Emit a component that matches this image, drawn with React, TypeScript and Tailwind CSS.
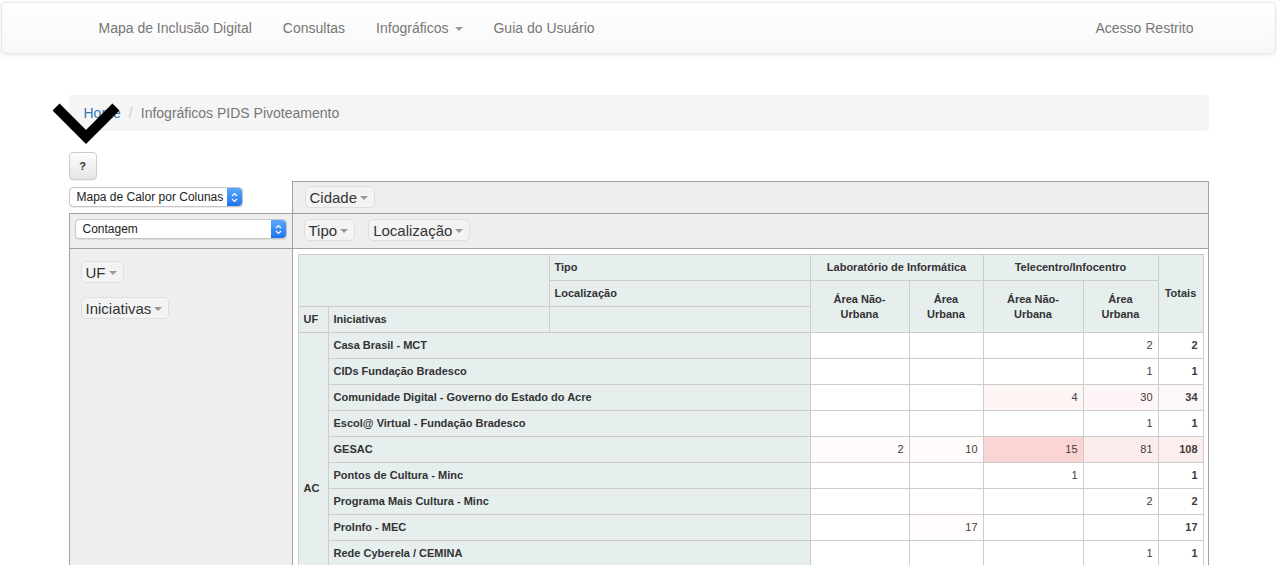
import React from "react";

type Row = {
  name: string;
  cells: (number | null)[];
  bgs: string[];
  total: number;
  totalBg: string;
};

const W = "#ffffff";

const rows: Row[] = [
  { name: "Casa Brasil - MCT", cells: [null, null, null, 2], bgs: [W, W, W, W], total: 2, totalBg: W },
  { name: "CIDs Fundação Bradesco", cells: [null, null, null, 1], bgs: [W, W, W, W], total: 1, totalBg: W },
  {
    name: "Comunidade Digital - Governo do Estado do Acre",
    cells: [null, null, 4, 30],
    bgs: [W, W, "#fef5f5", "#fef6f6"],
    total: 34,
    totalBg: "#fef7f7",
  },
  { name: "Escol@ Virtual - Fundação Bradesco", cells: [null, null, null, 1], bgs: [W, W, W, W], total: 1, totalBg: W },
  {
    name: "GESAC",
    cells: [2, 10, 15, 81],
    bgs: ["#fffafa", "#fffbfb", "#fbd4d4", "#fdecec"],
    total: 108,
    totalBg: "#fdeeee",
  },
  { name: "Pontos de Cultura - Minc", cells: [null, null, 1, null], bgs: [W, W, W, W], total: 1, totalBg: W },
  { name: "Programa Mais Cultura - Minc", cells: [null, null, null, 2], bgs: [W, W, W, W], total: 2, totalBg: W },
  { name: "ProInfo - MEC", cells: [null, 17, null, null], bgs: [W, "#fffcfb", W, W], total: 17, totalBg: W },
  { name: "Rede Cyberela / CEMINA", cells: [null, null, null, 1], bgs: [W, W, W, W], total: 1, totalBg: W },
  { name: "Telecentros.BR", cells: [null, null, null, 3], bgs: [W, W, W, W], total: 3, totalBg: W },
  { name: "Territórios Digitais", cells: [null, null, 1, null], bgs: [W, W, W, W], total: 1, totalBg: W },
  { name: "Quiosque do Cidadão", cells: [null, null, null, 1], bgs: [W, W, W, W], total: 1, totalBg: W },
];

function Stepper() {
  return (
    <span className="flex h-full w-[15px] flex-col items-center justify-center rounded-r-[4px] bg-gradient-to-b from-[#5aa8fb] to-[#1d74ec]">
      <svg width="7" height="11" viewBox="0 0 7 11" fill="none">
        <path d="M1 4 L3.5 1.5 L6 4" stroke="white" strokeWidth="1.2" />
        <path d="M1 7 L3.5 9.5 L6 7" stroke="white" strokeWidth="1.2" />
      </svg>
    </span>
  );
}

function FakeSelect({ label, className }: { label: string; className: string }) {
  return (
    <div
      className={`flex h-[20px] items-center justify-between rounded-[4px] border border-[#c6c6c6] bg-white text-[12px] text-[#222] shadow-[0_1px_1px_rgba(0,0,0,0.08)] ${className}`}
    >
      <span className="pl-[7px]">{label}</span>
      <Stepper />
    </div>
  );
}

function Caret({ className = "" }: { className?: string }) {
  return (
    <svg className={className} width="8" height="4" viewBox="0 0 8 4">
      <polygon points="0,0 8,0 4,4" fill="#999" />
    </svg>
  );
}

function Attr({ label }: { label: string }) {
  return (
    <span className="inline-flex h-[22px] items-center whitespace-nowrap rounded-[5px] border border-[#dedede] bg-[#f3f3f3] pl-[4px] pr-[6px] text-[15px] leading-none text-[#333]">
      {label}
      <Caret className="ml-[3px] mt-[1px]" />
    </span>
  );
}

const th = "border border-[#cdcdcd] bg-[#e6eeee] px-[5px] text-[11px] font-bold text-[#333] leading-[15px]";
const td = "border border-[#cdcdcd] px-[5px] text-right text-[11px] text-[#3d3d3d] leading-[15px]";

function PivotTable() {
  return (
    <table className="w-[905px] table-fixed border-collapse font-['Liberation_Sans',Arial,sans-serif]">
      <colgroup>
        <col className="w-[30px]" />
        <col className="w-[221px]" />
        <col className="w-[261px]" />
        <col className="w-[99px]" />
        <col className="w-[74px]" />
        <col className="w-[100px]" />
        <col className="w-[75px]" />
        <col className="w-[45px]" />
      </colgroup>
      <thead>
        <tr className="h-[26px]">
          <th colSpan={2} rowSpan={2} className={th}></th>
          <th className={`${th} text-left`}>Tipo</th>
          <th colSpan={2} className={`${th} text-center`}>
            Laboratório de Informática
          </th>
          <th colSpan={2} className={`${th} text-center`}>
            Telecentro/Infocentro
          </th>
          <th rowSpan={3} className={`${th} text-center`}>
            Totais
          </th>
        </tr>
        <tr className="h-[26px]">
          <th className={`${th} text-left`}>Localização</th>
          <th rowSpan={2} className={`${th} text-center`}>
            Área Não-
            <br />
            Urbana
          </th>
          <th rowSpan={2} className={`${th} text-center`}>
            Área
            <br />
            Urbana
          </th>
          <th rowSpan={2} className={`${th} text-center`}>
            Área Não-
            <br />
            Urbana
          </th>
          <th rowSpan={2} className={`${th} text-center`}>
            Área
            <br />
            Urbana
          </th>
        </tr>
        <tr className="h-[26px]">
          <th className={`${th} text-left`}>UF</th>
          <th className={`${th} text-left`}>Iniciativas</th>
          <th className={th}></th>
        </tr>
      </thead>
      <tbody>
        {rows.map((r, i) => (
          <tr key={r.name} className="h-[26px]">
            {i === 0 && (
              <th rowSpan={rows.length} className={`${th} text-left align-middle`}>
                AC
              </th>
            )}
            <th colSpan={2} className={`${th} text-left`}>
              {r.name}
            </th>
            {r.cells.map((c, j) => (
              <td key={j} className={td} style={{ backgroundColor: r.bgs[j] }}>
                {c ?? ""}
              </td>
            ))}
            <td className={`${td} font-bold`} style={{ backgroundColor: r.totalBg }}>
              {r.total}
            </td>
          </tr>
        ))}
      </tbody>
    </table>
  );
}

export default function App() {
  return (
    <div className="relative min-h-screen bg-white font-['Liberation_Sans',Arial,sans-serif] text-[14px] text-[#333]">
      {/* navbar */}
      <div className="px-[1px] pt-[2px]">
        <nav className="h-[52px] rounded-[4px] border border-[#e7e7e7] bg-gradient-to-b from-white to-[#f8f8f8] shadow-[0_1px_5px_rgba(0,0,0,0.075)]">
          <div className="mx-auto flex h-full w-[1170px] items-center justify-between px-[15px] pt-[1px] text-[#777]">
            <ul className="ml-[15px] flex">
              <li className="pl-[15px] pr-[16px]">Mapa de Inclusão Digital</li>
              <li className="pl-[15px] pr-[16px]">Consultas</li>
              <li className="flex items-center px-[15px]">
                Infográficos
                <Caret className="ml-[7px]" />
              </li>
              <li className="px-[15px]">Guia do Usuário</li>
            </ul>
            <ul className="flex">
              <li className="px-[15px]">Acesso Restrito</li>
            </ul>
          </div>
        </nav>
      </div>

      <div className="mx-auto w-[1170px] px-[15px]">
        {/* breadcrumb */}
        <div className="mt-[41px] flex h-[36px] items-center rounded-[4px] bg-[#f5f5f5] px-[15px]">
          <span className="text-[#337ab7]">Home</span>
          <span className="px-[8px] text-[#ccc]">/</span>
          <span className="text-[#777]">Infográficos PIDS Pivoteamento</span>
        </div>

        <button className="mt-[21px] flex h-[28px] w-[28px] items-center justify-center rounded-[4px] border border-[#ccc] bg-gradient-to-b from-white to-[#e4e4e4] text-[11px] font-bold text-[#333] shadow-[0_1px_1px_rgba(0,0,0,0.05)]">
          ?
        </button>

        {/* pivot ui */}
        <div className="mt-[1px] grid grid-cols-[223px_917px] grid-rows-[32px_35px_auto]">
          <div className="pt-[6px]">
            <FakeSelect label="Mapa de Calor por Colunas" className="w-[174px]" />
          </div>
          <div className="border border-b-0 border-[#a2a2a2] bg-[#eeeeee] pl-[12px] pt-[4px]">
            <Attr label="Cidade" />
          </div>

          <div className="border border-r-0 border-b-0 border-[#a2a2a2] bg-[#eeeeee] pl-[5px] pt-[5px]">
            <FakeSelect label="Contagem" className="w-[212px]" />
          </div>
          <div className="flex gap-[13px] border border-b-0 border-[#a2a2a2] bg-[#eeeeee] pl-[11px] pt-[5px]">
            <Attr label="Tipo" />
            <Attr label="Localização" />
          </div>

          <div className="flex flex-col items-start gap-[14px] border border-r-0 border-[#a2a2a2] bg-[#eeeeee] pl-[11px] pt-[12px]">
            <Attr label="UF" />
            <Attr label="Iniciativas" />
          </div>
          <div className="border border-[#a2a2a2] p-[5px]">
            <PivotTable />
          </div>
        </div>
      </div>

      {/* big chevron overlay */}
      <svg className="absolute left-[53px] top-[100px]" width="66" height="46" viewBox="0 0 66 46" fill="none">
        <polyline points="3,7 33,37 63,7" stroke="black" strokeWidth="10" strokeLinecap="butt" strokeLinejoin="miter" />
      </svg>
    </div>
  );
}
